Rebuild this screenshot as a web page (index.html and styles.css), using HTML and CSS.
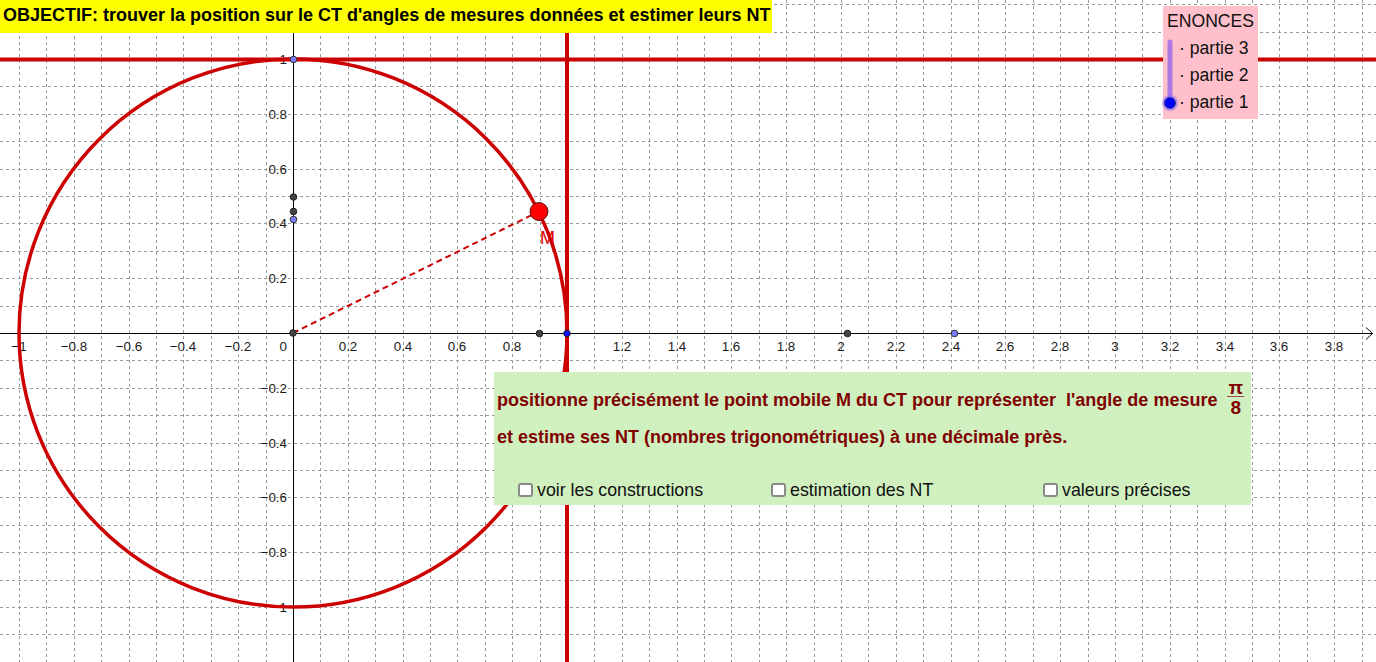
FILE: index.html
```html
<!DOCTYPE html>
<html lang="fr">
<head>
<meta charset="utf-8">
<title>Cercle trigonométrique</title>
<link rel="stylesheet" href="styles.css">
</head>
<body>
<div class="stage">
  <svg class="canvas" width="1376" height="662" viewBox="0 0 1376 662" xmlns="http://www.w3.org/2000/svg">
    <path class="grid" d="M19.5 0V662M46.5 0V662M74.5 0V662M101.5 0V662M129.5 0V662M156.5 0V662M183.5 0V662M211.5 0V662M238.5 0V662M266.5 0V662M320.5 0V662M348.5 0V662M375.5 0V662M403.5 0V662M430.5 0V662M457.5 0V662M485.5 0V662M512.5 0V662M540.5 0V662M594.5 0V662M622.5 0V662M649.5 0V662M677.5 0V662M704.5 0V662M731.5 0V662M759.5 0V662M786.5 0V662M814.5 0V662M841.5 0V662M868.5 0V662M896.5 0V662M923.5 0V662M951.5 0V662M978.5 0V662M1005.5 0V662M1033.5 0V662M1060.5 0V662M1088.5 0V662M1115.5 0V662M1142.5 0V662M1170.5 0V662M1197.5 0V662M1225.5 0V662M1252.5 0V662M1279.5 0V662M1307.5 0V662M1334.5 0V662M1362.5 0V662M0 4.5H1376M0 32.5H1376M0 86.5H1376M0 114.5H1376M0 141.5H1376M0 169.5H1376M0 196.5H1376M0 223.5H1376M0 251.5H1376M0 278.5H1376M0 306.5H1376M0 360.5H1376M0 388.5H1376M0 415.5H1376M0 443.5H1376M0 470.5H1376M0 497.5H1376M0 525.5H1376M0 552.5H1376M0 580.5H1376M0 607.5H1376M0 634.5H1376"/>
    <path class="axis" d="M293.5 0V662M0 333.5H1373"/>
    <path class="axis" d="M1366 327.5L1372.5 333.5L1366 339.5"/>
    <g class="ticks">
      <text x="19" y="351" text-anchor="middle">−1</text>
      <text x="74" y="351" text-anchor="middle">−0.8</text>
      <text x="129" y="351" text-anchor="middle">−0.6</text>
      <text x="183" y="351" text-anchor="middle">−0.4</text>
      <text x="238" y="351" text-anchor="middle">−0.2</text>
      <text x="287" y="351" text-anchor="end">0</text>
      <text x="348" y="351" text-anchor="middle">0.2</text>
      <text x="403" y="351" text-anchor="middle">0.4</text>
      <text x="457" y="351" text-anchor="middle">0.6</text>
      <text x="512" y="351" text-anchor="middle">0.8</text>
      <text x="622" y="351" text-anchor="middle">1.2</text>
      <text x="677" y="351" text-anchor="middle">1.4</text>
      <text x="731" y="351" text-anchor="middle">1.6</text>
      <text x="786" y="351" text-anchor="middle">1.8</text>
      <text x="841" y="351" text-anchor="middle">2</text>
      <text x="896" y="351" text-anchor="middle">2.2</text>
      <text x="951" y="351" text-anchor="middle">2.4</text>
      <text x="1005" y="351" text-anchor="middle">2.6</text>
      <text x="1060" y="351" text-anchor="middle">2.8</text>
      <text x="1115" y="351" text-anchor="middle">3</text>
      <text x="1170" y="351" text-anchor="middle">3.2</text>
      <text x="1225" y="351" text-anchor="middle">3.4</text>
      <text x="1279" y="351" text-anchor="middle">3.6</text>
      <text x="1334" y="351" text-anchor="middle">3.8</text>
      <text x="287" y="64" text-anchor="end">1</text>
      <text x="287" y="119" text-anchor="end">0.8</text>
      <text x="287" y="174" text-anchor="end">0.6</text>
      <text x="287" y="228" text-anchor="end">0.4</text>
      <text x="287" y="283" text-anchor="end">0.2</text>
      <text x="287" y="393" text-anchor="end">−0.2</text>
      <text x="287" y="448" text-anchor="end">−0.4</text>
      <text x="287" y="502" text-anchor="end">−0.6</text>
      <text x="287" y="557" text-anchor="end">−0.8</text>
      <text x="287" y="612" text-anchor="end">−1</text>
    </g>
    <circle class="circle" cx="293" cy="333" r="274"/>
    <path class="redline" d="M0 59.5H1376M567 0V662"/>
    <path class="radius" d="M293 333L539 211.5"/>
    <circle class="pt-dark" cx="293" cy="333" r="3.3"/>
    <circle class="pt-dark" cx="539.5" cy="333.5" r="3.3"/>
    <circle class="pt-dark" cx="847.5" cy="333.5" r="3.3"/>
    <circle class="pt-dark" cx="293.5" cy="197" r="3.3"/>
    <circle class="pt-dark" cx="293.5" cy="211.5" r="3.3"/>
    <circle class="pt-light" cx="293.5" cy="219.5" r="3.3"/>
    <circle class="pt-light" cx="293.5" cy="59.5" r="3.3"/>
    <circle class="pt-light" cx="954.5" cy="333.5" r="3.3"/>
    <circle class="pt-blue" cx="567" cy="333.5" r="3.3"/>
    <circle class="pt-m" cx="539" cy="211.5" r="9"/>
    <text class="label-m" x="540" y="244">M</text>
  </svg>

  <div class="title">OBJECTIF: trouver la position sur le CT d'angles de mesures données et estimer leurs NT</div>

  <div class="enonces">
    <div class="enonces-head">ENONCES</div>
    <div class="enonces-body">
      <svg class="slider" width="20" height="81" viewBox="0 0 20 81" xmlns="http://www.w3.org/2000/svg">
        <path class="slider-track" d="M10 7V67"/>
        <circle class="slider-halo" cx="10" cy="68" r="8"/>
        <circle class="slider-knob" cx="10" cy="68" r="5.5"/>
      </svg>
      <ul class="parts">
        <li>· partie 3</li>
        <li>· partie 2</li>
        <li>· partie 1</li>
      </ul>
    </div>
  </div>

  <div class="panel">
    <div class="line1">
      <span class="q1">positionne précisément le point mobile M du CT pour représenter&nbsp; l'angle de mesure</span>
      <span class="frac"><span class="num">π</span><span class="den">8</span></span>
    </div>
    <div class="line2">et estime ses NT (nombres trigonométriques) à une décimale près.</div>
    <div class="opts">
      <label class="opt opt1"><span class="box"></span>voir les constructions</label>
      <label class="opt opt2"><span class="box"></span>estimation des NT</label>
      <label class="opt opt3"><span class="box"></span>valeurs précises</label>
    </div>
  </div>
</div>
</body>
</html>
```

FILE: styles.css
```css
html, body {
  margin: 0;
  padding: 0;
  background: #ffffff;
}

.stage {
  position: relative;
  width: 1376px;
  height: 662px;
  overflow: hidden;
  font-family: "Liberation Sans", Arial, sans-serif;
}

.canvas {
  display: block;
}

.grid {
  fill: none;
  stroke: #9a9a9a;
  stroke-width: 1;
  stroke-dasharray: 3 3;
}

.axis {
  fill: none;
  stroke: #000000;
  stroke-width: 1;
}

.ticks text {
  font-family: "Liberation Sans", Arial, sans-serif;
  font-size: 13.4px;
  fill: #1a1a1a;
}

.circle {
  fill: none;
  stroke: #cc0000;
  stroke-width: 3.5;
}

.redline {
  fill: none;
  stroke: #cc0000;
  stroke-width: 4;
}

.radius {
  fill: none;
  stroke: #cc0000;
  stroke-width: 2;
  stroke-dasharray: 6 4;
}

.pt-dark {
  fill: #444444;
  stroke: #222222;
  stroke-width: 1;
}

.pt-light {
  fill: #7b7bff;
  stroke: #333333;
  stroke-width: 1;
}

.pt-blue {
  fill: #1010ff;
  stroke: #222222;
  stroke-width: 1;
}

.pt-m {
  fill: #ff0000;
  stroke: #551111;
  stroke-width: 1;
}

.label-m {
  font-family: "Liberation Sans", Arial, sans-serif;
  font-size: 18px;
  fill: #e00000;
}

.title {
  position: absolute;
  left: 0;
  top: 0;
  width: 772px;
  height: 33px;
  box-sizing: border-box;
  padding-left: 3px;
  background: #ffff00;
  color: #000000;
  font-weight: bold;
  font-size: 18px;
  line-height: 31px;
  white-space: nowrap;
}

.enonces {
  position: absolute;
  left: 1163px;
  top: 6px;
  width: 95px;
  height: 113px;
  box-sizing: border-box;
  padding-top: 5px;
  background: #ffc0cb;
  color: #111111;
  font-size: 17.6px;
}

.enonces-head {
  padding-left: 4px;
  line-height: 20px;
  height: 20px;
}

.enonces-body {
  display: flex;
  margin-top: 3.7px;
  margin-left: -3px;
}

.slider {
  display: block;
  flex: none;
  overflow: visible;
}

.slider-track {
  fill: none;
  stroke: #ad78e6;
  stroke-width: 5;
  stroke-linecap: round;
}

.slider-halo {
  fill: #8070ff;
  opacity: 0.55;
}

.slider-knob {
  fill: #0000ff;
  stroke: #222244;
  stroke-width: 1;
  stroke-dasharray: 1.5 1;
}

.parts {
  list-style: none;
  margin: 0 0 0 -1px;
  padding: 0;
}

.parts li {
  line-height: 27px;
  height: 27px;
  white-space: nowrap;
}

.panel {
  position: absolute;
  left: 494px;
  top: 372px;
  width: 757px;
  height: 133px;
  box-sizing: border-box;
  padding: 7px 0 0 3px;
  background: #d0f0c0;
}

.line1 {
  display: flex;
  align-items: flex-start;
  height: 38px;
}

.q1, .line2 {
  color: #800000;
  font-weight: bold;
  font-size: 18px;
  line-height: 20px;
  white-space: nowrap;
}

.q1 {
  margin-top: 11px;
}

.frac {
  display: flex;
  flex-direction: column;
  align-items: center;
  margin-left: 10px;
  color: #800000;
  font-weight: bold;
  font-size: 19px;
}

.num {
  line-height: 17px;
  height: 17px;
  padding: 0 1px;
  border-bottom: 1.5px solid #9a4a4a;
}

.den {
  line-height: 21px;
  height: 21px;
}

.line2 {
  margin-top: 10px;
}

.opts {
  display: flex;
  margin-top: 33px;
  padding-left: 21px;
  color: #111111;
  font-size: 17.8px;
  line-height: 20px;
}

.opt {
  display: flex;
  align-items: center;
  white-space: nowrap;
}

.opt1 {
  width: 253px;
}

.opt2 {
  width: 272px;
}

.box {
  display: block;
  width: 15px;
  height: 14px;
  box-sizing: border-box;
  margin-right: 4px;
  border: 2px solid #8a8a8a;
  border-radius: 3px;
  background: #ffffff;
}
```
